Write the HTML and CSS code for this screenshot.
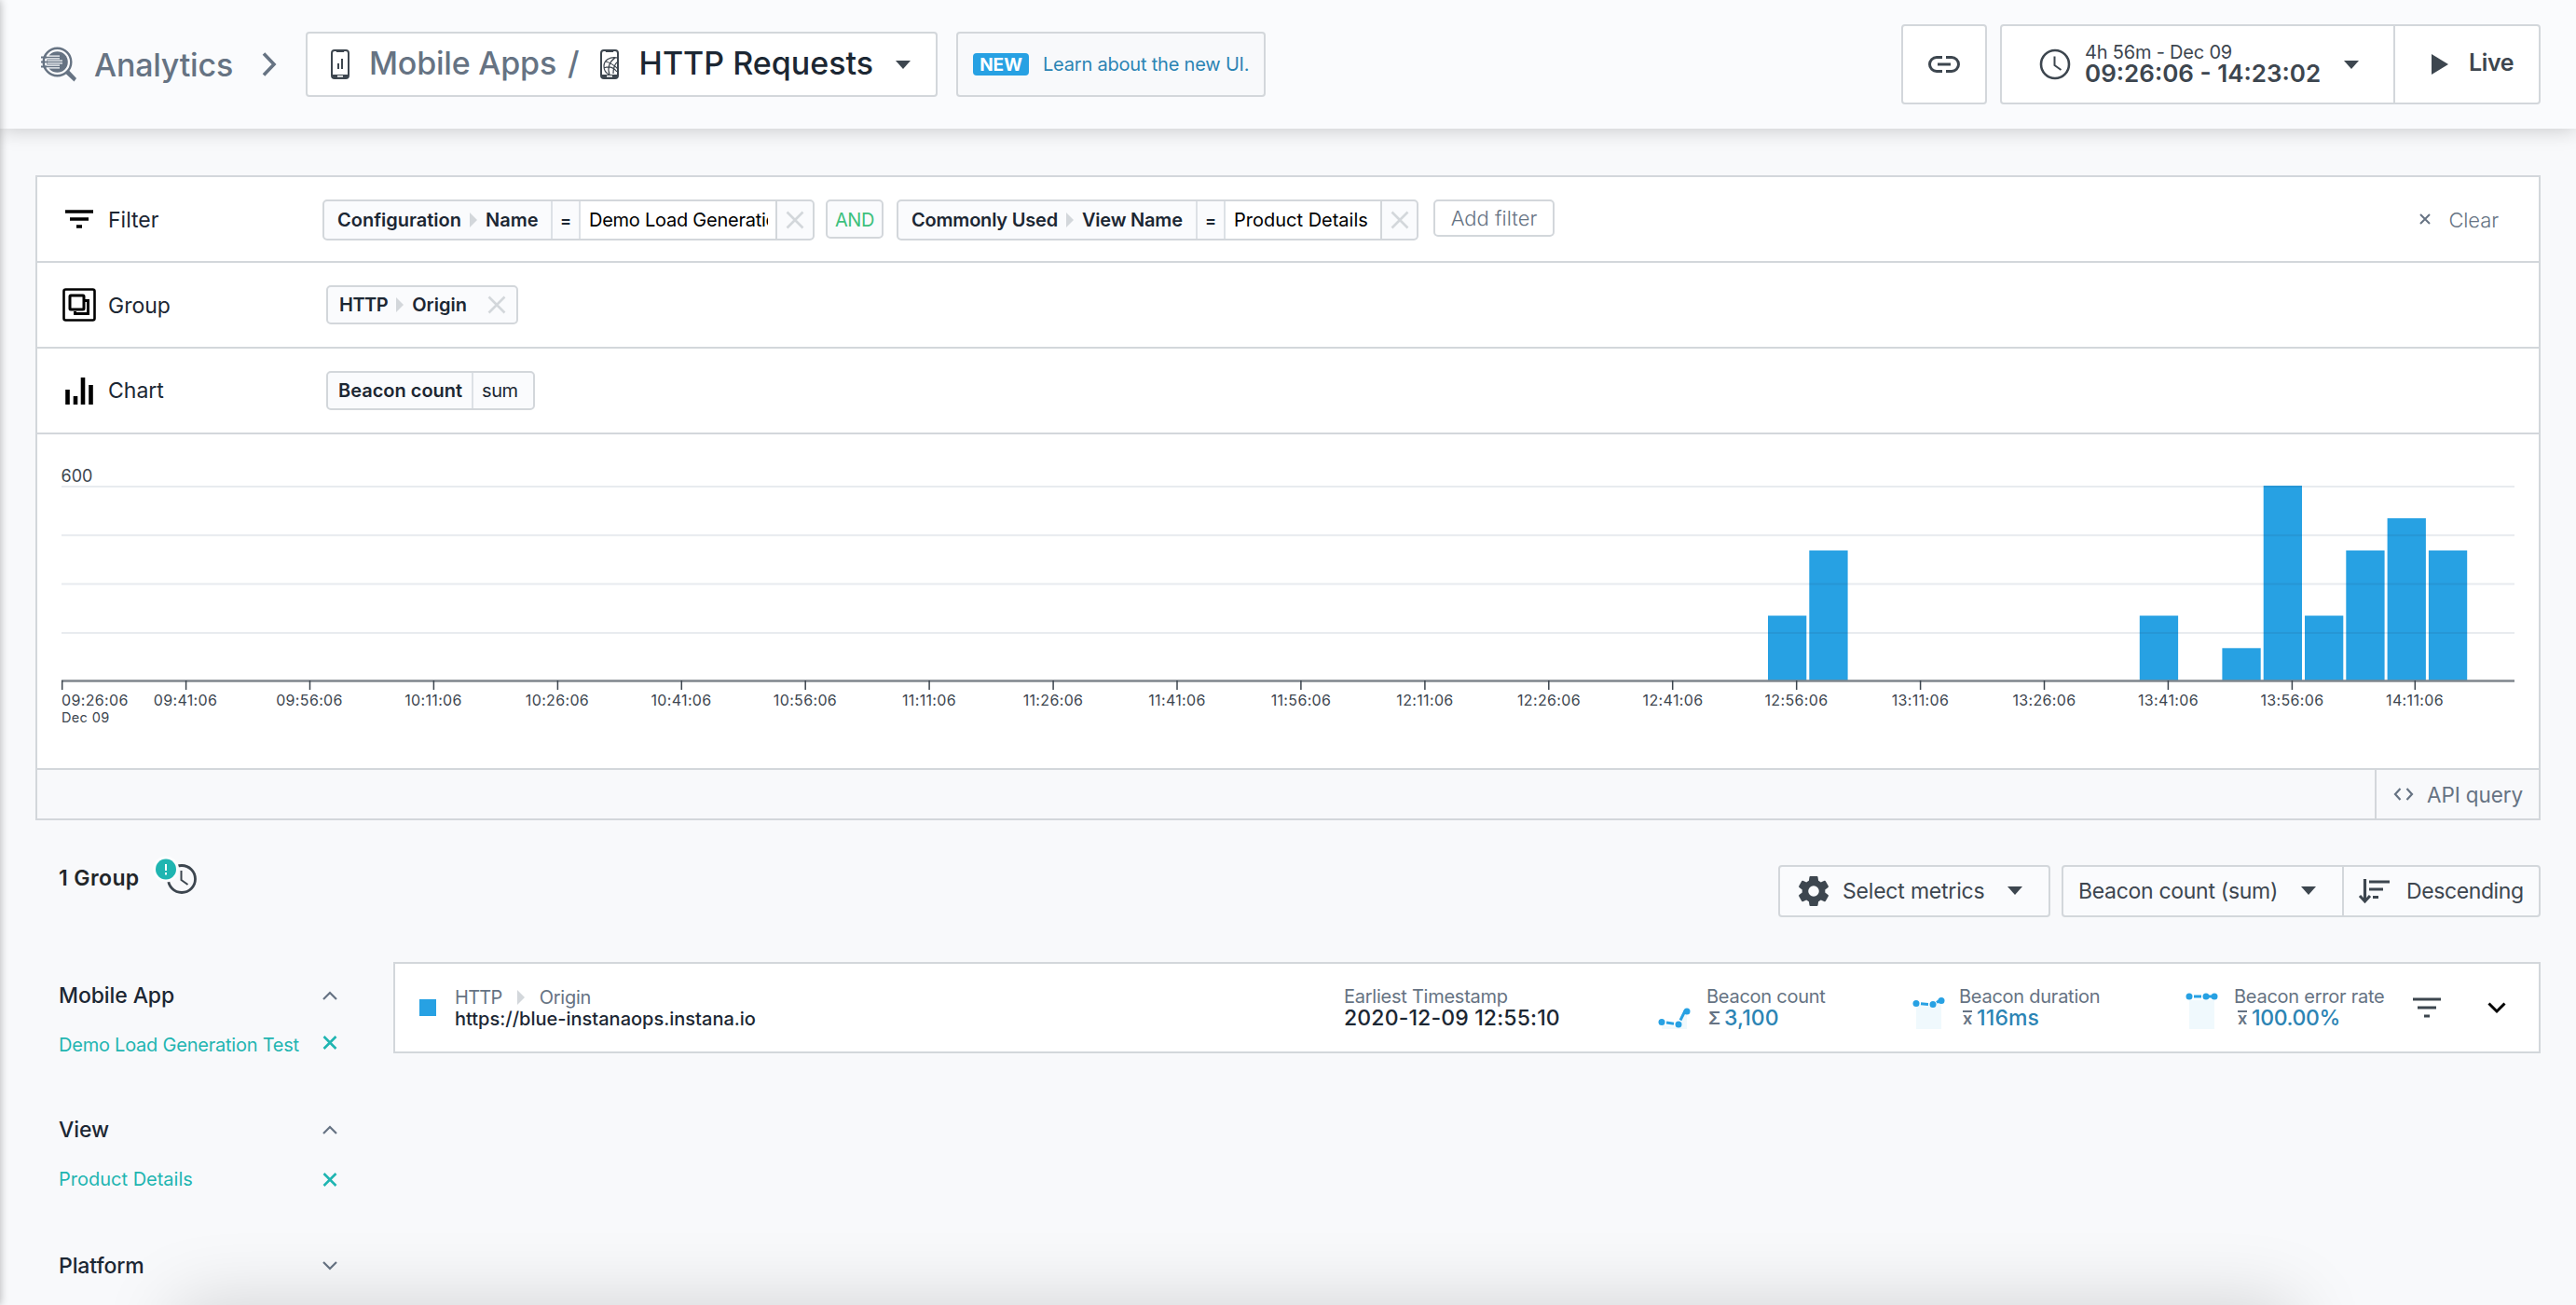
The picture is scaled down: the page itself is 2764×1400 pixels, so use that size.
FILE: index.html
```html
<!DOCTYPE html>
<html lang="en">
<head>
    <meta charset="UTF-8">
    <title>Analytics - HTTP Requests</title>
    <link rel="stylesheet" href="styles.css">
</head>
<body>
    <header class="topbar">
        <div class="crumb">
            <svg class="crumb-icon" width="40" height="38" viewBox="0 0 40 38">
                <path d="M0 11.500h6M0 16.500h5M0 21.500h6" stroke="#667383" stroke-width="1.800"/>
                <circle cx="17.500" cy="16.500" r="14.800" fill="none" stroke="#667383" stroke-width="2.400"/>
                <circle cx="17.500" cy="16.500" r="11.300" fill="#667383"/>
                <path d="M26 28.500l4-3 8 8.500-2.500 3.500z" fill="#667383"/>
                <path d="M7 11.500h13M7 16.500h16M7 21.500h13" stroke="#fafbfd" stroke-width="4.200"/>
                <path d="M5 11.500h16M5 16.500h19M5 21.500h16" stroke="#667383" stroke-width="1.700"/>
            </svg>
            <span class="crumb-text">Analytics</span>
            <svg class="crumb-sep" width="16" height="26" viewBox="0 0 16 26"><path d="M2 1.500l11 11.500-11 11.500" fill="none" stroke="#667383" stroke-width="3.600"/></svg>
        </div>

        <div class="box source-select">
            <svg class="phone-icon" width="20" height="32" viewBox="0 0 20 32">
                <rect x="1" y="1" width="18" height="30" rx="3" fill="none" stroke="#3d464f" stroke-width="2"/>
                <path d="M5 0h10l-1 3H6zM1 27h18v2a2 2 0 0 1-2 2H3a2 2 0 0 1-2-2z" fill="#3d464f"/>
                <path d="M7 28.800h6" stroke="#fff" stroke-width="1.600"/>
                <path d="M8 15v6M12 10v11" stroke="#3d464f" stroke-width="2"/>
            </svg>
            <span class="source-app">Mobile Apps</span>
            <span class="source-slash">/</span>
            <svg class="phone-icon" width="20" height="32" viewBox="0 0 20 32">
                <rect x="1" y="1" width="18" height="30" rx="3" fill="none" stroke="#3d464f" stroke-width="2"/>
                <path d="M5 0h10l-1 3H6zM1 27h18v2a2 2 0 0 1-2 2H3a2 2 0 0 1-2-2z" fill="#3d464f"/>
                <path d="M7 28.800h6" stroke="#fff" stroke-width="1.600"/>
                <path d="M19 9C10 7 4 12 4 18s3 8 6 9M16 9C9 14 8 21 10 27M6 13c4 1 9 4 13 8M4 20c5-2 10-1 14 4M19 13c-4 3-5 8-5 13" fill="none" stroke="#3d464f" stroke-width="1.200"/>
            </svg>
            <span class="source-type">HTTP Requests</span>
            <span class="caret"></span>
        </div>

        <div class="box new-ui">
            <span class="badge">NEW</span>
            <a class="new-link">Learn about the new UI.</a>
        </div>

        <div class="box link-btn">
            <svg width="34" height="18" viewBox="0 0 34 18"><path d="M15 1.500H9a7.500 7.500 0 0 0 0 15H15M19 1.500h6a7.500 7.500 0 0 1 0 15H19M10 9h14" fill="none" stroke="#3d464f" stroke-width="3"/></svg>
        </div>

        <div class="box time-picker">
            <div class="time-range">
                <svg class="clock" width="34" height="34" viewBox="0 0 34 34"><circle cx="17" cy="17" r="15" fill="none" stroke="#3d464f" stroke-width="2.600"/><path d="M16.500 8.500v9.500l7 5" fill="none" stroke="#3d464f" stroke-width="2"/></svg>
                <div class="time-labels">
                    <span class="time-span">4h 56m - Dec 09</span>
                    <span class="time-value">09:26:06 - 14:23:02</span>
                </div>
                <span class="caret"></span>
            </div>
            <div class="live">
                <svg width="18" height="22" viewBox="0 0 18 22"><path d="M0 0l18 11L0 22z" fill="#3d464f"/></svg>
                <span class="live-text">Live</span>
            </div>
        </div>
    </header>

    <main class="content">
        <section class="panel">
            <div class="row row-filter">
                <div class="row-icon"><svg width="30" height="20" viewBox="0 0 30 20"><path d="M0 2h30M5 10h20M12 18h6" stroke="#000" stroke-width="3.600"/></svg></div>
                <span class="row-label">Filter</span>
                <div class="chips">
                    <div class="chip chip-long">
                        <div class="chip-key"><span>Configuration</span><i class="tri"></i><span>Name</span></div>
                        <div class="chip-op">=</div>
                        <div class="chip-value">Demo Load Generation Test</div>
                        <div class="chip-x"><svg width="20" height="20" viewBox="0 0 20 20"><path d="M1.500 1.500l17 17M18.500 1.500l-17 17"/></svg></div>
                    </div>
                    <div class="chip-and">AND</div>
                    <div class="chip chip-short">
                        <div class="chip-key"><span>Commonly Used</span><i class="tri"></i><span>View Name</span></div>
                        <div class="chip-op">=</div>
                        <div class="chip-value">Product Details</div>
                        <div class="chip-x"><svg width="20" height="20" viewBox="0 0 20 20"><path d="M1.500 1.500l17 17M18.500 1.500l-17 17"/></svg></div>
                    </div>
                    <div class="add-filter">Add filter</div>
                </div>
                <div class="clear">
                    <svg width="12" height="12" viewBox="0 0 12 12"><path d="M1 1l10 10M11 1L1 11" stroke="#667383" stroke-width="2"/></svg>
                    <span class="clear-text">Clear</span>
                </div>
            </div>

            <div class="row row-group">
                <div class="row-icon"><svg width="36" height="36" viewBox="0 0 36 36"><rect x="1.500" y="1.500" width="33" height="33" rx="2" fill="none" stroke="#000" stroke-width="2.600"/><rect x="8" y="8" width="15" height="15" rx="1" fill="none" stroke="#000" stroke-width="3"/><path d="M24 13.500h3.500v14h-14V25" fill="none" stroke="#000" stroke-width="3"/></svg></div>
                <span class="row-label">Group</span>
                <div class="tag tag-group"><span class="tag-http">HTTP</span><i class="tri"></i><span>Origin</span><svg class="tag-x" width="20" height="20" viewBox="0 0 20 20"><path d="M1.500 1.500l17 17M18.500 1.500l-17 17"/></svg></div>
            </div>

            <div class="row row-chart">
                <div class="row-icon"><svg width="30" height="30" viewBox="0 0 30 30"><path d="M2.500 14v16M11 21v9M19 1v29M27.500 9v21" stroke="#000" stroke-width="4.600"/></svg></div>
                <span class="row-label">Chart</span>
                <div class="tag tag-chart"><span class="tag-key">Beacon count</span><span class="tag-agg">sum</span></div>
            </div>

            <div class="chart">
                <svg width="2684" height="358" viewBox="0 0 2684 358">
                    <g fill="#27a1e3">
                        <rect x="1857" y="194.500" width="41.300" height="69.500"/>
                        <rect x="1901.300" y="124.500" width="41.300" height="139.500"/>
                        <rect x="2255.800" y="194.500" width="41.300" height="69.500"/>
                        <rect x="2344.400" y="229.300" width="41.300" height="34.700"/>
                        <rect x="2388.700" y="55" width="41.300" height="209"/>
                        <rect x="2433" y="194.500" width="41.300" height="69.500"/>
                        <rect x="2477.300" y="124.500" width="41.300" height="139.500"/>
                        <rect x="2521.600" y="90" width="41.300" height="174"/>
                        <rect x="2565.900" y="124.500" width="41.300" height="139.500"/>
                    </g>
                    <path class="grid" d="M26 56h2632M26 108.300h2632M26 160.600h2632M26 212.900h2632"/>
                    <path class="axis" d="M26 264.500h2632"/>
                    <path class="ticks" d="M26.700 264v10M159.600 264v10M292.500 264v10M425.400 264v10M558.400 264v10M691.300 264v10M824.200 264v10M957.100 264v10M1090.100 264v10M1223 264v10M1355.900 264v10M1488.900 264v10M1621.800 264v10M1754.700 264v10M1887.700 264v10M2020.600 264v10M2153.500 264v10M2286.400 264v10M2419.400 264v10M2551.300 264v10"/>
                    <text class="ymax" x="25.500" y="50.500">600</text>
                    <g class="tick-labels">
                        <text class="first" x="26" y="291">09:26:06</text>
                        <text x="159" y="291">09:41:06</text>
                        <text x="292" y="291">09:56:06</text>
                        <text x="425" y="291">10:11:06</text>
                        <text x="558" y="291">10:26:06</text>
                        <text x="691" y="291">10:41:06</text>
                        <text x="824" y="291">10:56:06</text>
                        <text x="957" y="291">11:11:06</text>
                        <text x="1090" y="291">11:26:06</text>
                        <text x="1223" y="291">11:41:06</text>
                        <text x="1356" y="291">11:56:06</text>
                        <text x="1489" y="291">12:11:06</text>
                        <text x="1622" y="291">12:26:06</text>
                        <text x="1755" y="291">12:41:06</text>
                        <text x="1887.500" y="291">12:56:06</text>
                        <text x="2020.500" y="291">13:11:06</text>
                        <text x="2153.500" y="291">13:26:06</text>
                        <text x="2286.500" y="291">13:41:06</text>
                        <text x="2419.500" y="291">13:56:06</text>
                        <text x="2551" y="291">14:11:06</text>
                        <text class="first day" x="26" y="309">Dec 09</text>
                    </g>
                </svg>
            </div>

            <div class="panel-footer">
                <div class="api">
                    <svg width="22" height="14" viewBox="0 0 22 14"><path d="M7.500 1L2 7l5.500 6M14.500 1L20 7l-5.500 6" fill="none" stroke="#667383" stroke-width="2.200"/></svg>
                    <span class="api-text">API query</span>
                </div>
            </div>
        </section>

        <section class="toolbar">
            <span class="group-count">1 Group</span>
            <svg class="group-clock" width="46" height="44" viewBox="0 0 46 44">
                <circle cx="29" cy="25" r="14.500" fill="none" stroke="#3d464f" stroke-width="2.800"/>
                <path d="M28.500 16v10l7 5" fill="none" stroke="#3d464f" stroke-width="2"/>
                <circle cx="12" cy="14.500" r="14" fill="#fcfdfe"/>
                <circle cx="12" cy="14.500" r="11" fill="#1fb5b1"/>
                <path d="M12 9v7M12 18v2.500" stroke="#fff" stroke-width="2"/>
            </svg>
            <div class="box btn metrics">
                <svg width="32" height="32" viewBox="0 0 32 32"><path fill="#3d464f" fill-rule="evenodd" d="M12.500 0h7a1 1 0 0 1 1 .8l.6 4 2.700 1.600 3.800-1.600a1 1 0 0 1 1.200.4l3 5.400a1 1 0 0 1-.3 1.300l-3.200 2.500v3.200l3.200 2.500a1 1 0 0 1 .3 1.300l-3 5.400a1 1 0 0 1-1.200.4l-3.800-1.600-2.700 1.600-.6 4a1 1 0 0 1-1 .8h-7a1 1 0 0 1-1-.8l-.6-4-2.700-1.600-3.800 1.600a1 1 0 0 1-1.200-.4l-3-5.400a1 1 0 0 1 .3-1.300l3.200-2.500v-3.200L.5 11.900a1 1 0 0 1-.3-1.300l3-5.400a1 1 0 0 1 1.200-.4l3.800 1.600 2.700-1.600.6-4a1 1 0 0 1 1-.8zM16 10.200a5.800 5.800 0 1 0 0 11.600 5.800 5.800 0 1 0 0-11.600z"/></svg>
                <span class="metrics-text">Select metrics</span>
                <span class="caret"></span>
            </div>
            <div class="box btn sorting">
                <div class="sort-by"><span class="sort-text">Beacon count (sum)</span><span class="caret"></span></div>
                <div class="sort-dir">
                    <svg width="33" height="26" viewBox="0 0 33 26"><path d="M6.500 0v22" stroke="#3d464f" stroke-width="3.200"/><path d="M1 18l5.500 6 5.500-6" fill="none" stroke="#3d464f" stroke-width="3"/><path d="M11 3h22M11 11h15M15 19.500h6" stroke="#3d464f" stroke-width="3.200"/></svg>
                    <span class="dir-text">Descending</span>
                </div>
            </div>
        </section>

        <section class="results">
            <aside class="facets">
                <div class="facet-title"><span>Mobile App</span><svg width="16" height="10" viewBox="0 0 16 10"><path d="M1 9l7-7 7 7"/></svg></div>
                <div class="facet-item"><span>Demo Load Generation Test</span><svg class="raised" width="16" height="15" viewBox="0 0 16 15"><path d="M1.500 1l13 13M14.500 1l-13 13"/></svg></div>
                <div class="facet-title"><span>View</span><svg width="16" height="10" viewBox="0 0 16 10"><path d="M1 9l7-7 7 7"/></svg></div>
                <div class="facet-item"><span>Product Details</span><svg width="16" height="15" viewBox="0 0 16 15"><path d="M1.500 1l13 13M14.500 1l-13 13"/></svg></div>
                <div class="facet-title"><span>Platform</span><svg width="16" height="10" viewBox="0 0 16 10"><path d="M1 1l7 7 7-7"/></svg></div>
            </aside>

            <div class="result">
                <div class="swatch"></div>
                <div class="origin">
                    <div class="line1"><span class="origin-http">HTTP</span><i class="tri"></i><span>Origin</span></div>
                    <div class="line2">https://blue-instanaops.instana.io</div>
                </div>
                <div class="metric timestamp">
                    <div class="line1">Earliest Timestamp</div>
                    <div class="line2"><span class="stamp">2020-12-09 12:55:10</span></div>
                </div>
                <svg class="spark" width="36" height="40" viewBox="0 0 36 40">
                    <path d="M4 34l18 3 9-18v20H4z" fill="#f0f9fd"/>
                    <path d="M9 32l8 1.200M24 29.500l5-10" fill="none" stroke="#27a1e3" stroke-width="3"/>
                    <g fill="#27a1e3"><circle cx="4" cy="31.500" r="3.500"/><circle cx="22" cy="34" r="3.500"/><circle cx="31" cy="20" r="3.500"/></g>
                </svg>
                <div class="metric count">
                    <div class="line1">Beacon count</div>
                    <div class="line2"><span class="agg">Σ</span><span class="num">3,100</span></div>
                </div>
                <svg class="spark" width="36" height="40" viewBox="0 0 36 40">
                    <path d="M4 13l18 1 9-4v29H4z" fill="#f0f9fd"/>
                    <path d="M9 11.800l8 .6M26 10.500l3-2" fill="none" stroke="#27a1e3" stroke-width="3"/>
                    <g fill="#27a1e3"><circle cx="4" cy="11.500" r="3.500"/><circle cx="22" cy="12.500" r="3.500"/><circle cx="31" cy="8.500" r="3.500"/></g>
                </svg>
                <div class="metric duration">
                    <div class="line1">Beacon duration</div>
                    <div class="line2"><span class="agg mean">x</span><span class="num">116ms</span></div>
                </div>
                <svg class="spark" width="36" height="40" viewBox="0 0 36 40">
                    <path d="M4 8h27v31H4z" fill="#f0f9fd"/>
                    <path d="M9 4h8M25 4h3" fill="none" stroke="#27a1e3" stroke-width="3"/>
                    <g fill="#27a1e3"><circle cx="4" cy="4" r="3.500"/><circle cx="22" cy="4" r="3.500"/><circle cx="31" cy="4" r="3.500"/></g>
                </svg>
                <div class="metric errors">
                    <div class="line1">Beacon error rate</div>
                    <div class="line2"><span class="agg mean">x</span><span class="num">100.00%</span></div>
                </div>
                <svg width="30" height="22" viewBox="0 0 30 22"><path d="M0 2h30M5 11h20M12 20h6" stroke="#3d464f" stroke-width="3.200"/></svg>
                <svg class="result-toggle" width="20" height="13" viewBox="0 0 20 13"><path d="M1.500 1.500L10 10l8.500-8.500" fill="none" stroke="#000" stroke-width="3"/></svg>
            </div>
        </section>
    </main>
</body>
</html>
```
FILE: styles.css
```css
* {
    box-sizing: border-box;
}

body {
    margin: 0;
    height: 1400px;
    overflow: hidden;
    position: relative;
    background: #f8f9fb;
    color: #1c2733;
    font-family: Inter, "Liberation Sans", sans-serif;
    font-size: 20px;
    white-space: nowrap;
}

/* edge of the navigation on the left */
body::before {
    content: "";
    position: absolute;
    z-index: 2;
    left: -10px;
    top: 0;
    width: 10px;
    height: 1400px;
    box-shadow: 0 0 10px rgba(0, 0, 0, 0.3);
}

/* shadow of the drawer below the fold */
body::after {
    content: "";
    position: absolute;
    left: 200px;
    top: 1410px;
    width: 2250px;
    height: 60px;
    box-shadow: 0 0 80px 10px rgba(0, 0, 0, 0.17);
}

svg {
    display: block;
    flex: none;
    overflow: visible;
}

.box {
    display: flex;
    align-items: center;
    background: #fff;
    border: 2px solid #d3d7db;
    border-radius: 4px;
}

.caret {
    border-left: 8px solid transparent;
    border-right: 8px solid transparent;
    border-top: 9px solid #3d464f;
}

.tri {
    border-top: 8px solid transparent;
    border-bottom: 8px solid transparent;
    border-left: 8px solid #d3d7db;
}

/* top bar */
.topbar {
    display: flex;
    align-items: center;
    height: 138px;
    padding: 0 38px 0 44px;
    background: #fafbfd;
    box-shadow: 0 0 22px rgba(0, 0, 0, 0.22);
}

.crumb {
    display: flex;
    align-items: center;
    width: 284px;
    color: #667383;
}

.crumb-text {
    margin-left: 17px;
    font-size: 34px;
    font-weight: 500;
    letter-spacing: -0.2px;
}

.crumb-sep {
    margin-left: auto;
    margin-right: 31px;
}

.source-select {
    width: 678px;
    height: 70px;
    padding-left: 25px;
    font-size: 34px;
    font-weight: 500;
}

.source-select span:not(.caret) {
    margin-top: -3px;
}

.source-app {
    margin-left: 21px;
    color: #667383;
    letter-spacing: -0.2px;
}

.source-slash {
    margin: 0 22px 0 12px;
    color: #667383;
}

.source-type {
    margin-left: 22px;
}

.source-select .caret {
    margin-left: 24px;
}

.new-ui {
    width: 332px;
    height: 70px;
    margin-left: 20px;
    padding-left: 16px;
    background: #f8f9fb;
}

.badge {
    width: 60px;
    height: 24px;
    border-radius: 4px;
    background: #27a1e3;
    color: #fff;
    font-size: 19px;
    font-weight: 700;
    line-height: 25px;
    text-align: center;
}

.new-link {
    margin-left: 15px;
    color: #2c84b4;
    letter-spacing: -0.2px;
}

.link-btn {
    width: 92px;
    height: 86px;
    margin-left: auto;
    justify-content: center;
}

.time-picker {
    width: 580px;
    height: 86px;
    margin-left: 14px;
    color: #3d464f;
}

.time-range {
    display: flex;
    align-items: center;
    width: 422px;
    height: 82px;
    padding-left: 40px;
    border-right: 2px solid #d3d7db;
}

.time-labels {
    display: flex;
    flex-direction: column;
    margin-left: 15px;
    margin-top: -3px;
}

.time-span {
    line-height: 22px;
    letter-spacing: -0.2px;
}

.time-value {
    font-size: 26px;
    font-weight: 600;
    line-height: 24px;
}

.time-range .caret {
    margin-left: 25px;
}

.live {
    display: flex;
    align-items: center;
    padding-left: 39px;
}

.live-text {
    margin: -4px 0 0 22px;
    font-size: 25px;
    font-weight: 600;
    letter-spacing: -0.4px;
}

/* query panel */
.content {
    padding: 50px 38px 0;
}

.panel {
    border: 2px solid #d3d7db;
    background: #fff;
}

.row {
    display: flex;
    align-items: center;
    height: 92px;
    padding-left: 25px;
    border-bottom: 2px solid #d3d7db;
}

.row-filter {
    padding-top: 2px;
}

.row-icon {
    display: flex;
    justify-content: center;
    width: 40px;
}

.row-filter .row-icon {
    margin-top: -2px;
}

.row-label {
    width: 234px;
    margin-left: 11px;
    font-size: 23px;
}

.row-filter .row-label {
    width: 230px;
}

.row-group .row-label {
    padding-top: 2px;
}

.row-chart .row-label {
    padding-bottom: 1px;
}

.chips {
    display: flex;
    align-items: flex-start;
}

.chip {
    display: flex;
    height: 44px;
    border: 2px solid #d3d7db;
    border-radius: 5px;
    background: #fafbfd;
    overflow: hidden;
}

.chip > div {
    display: flex;
    align-items: center;
}

.chip-long {
    width: 528px;
}

.chip-short {
    width: 560px;
}

.chip-key {
    padding-left: 14px;
    font-weight: 600;
    letter-spacing: -0.2px;
}

.chip-long .chip-key {
    width: 243px;
    letter-spacing: 0;
}

.chip-short .chip-key {
    width: 319px;
}

.chip-key .tri {
    margin: 0 9px;
}

.chip-op {
    width: 32px;
    justify-content: center;
    border-left: 2px solid #dde1e6;
    border-right: 2px solid #dde1e6;
    font-size: 18px;
    font-weight: 600;
}

.chip .chip-value {
    display: block;
    overflow: hidden;
    padding-left: 9px;
    background: #fff;
    color: #000;
    line-height: 40px;
}

.chip-long .chip-value {
    width: 209px;
    border-right: 8px solid #fff;
    letter-spacing: -0.25px;
}

.chip-short .chip-value {
    width: 166px;
}

.chip-x {
    flex: 1;
    justify-content: center;
    border-left: 2px solid #d3d7db;
}

.chip-x path,
.tag-x path {
    fill: none;
    stroke: #d3d7db;
    stroke-width: 2.6;
}

.chip-and {
    width: 62px;
    height: 42px;
    margin: 0 14px 0 12px;
    border: 2px solid #d3d7db;
    border-radius: 5px;
    background: #fafbfd;
    color: #3dc07c;
    letter-spacing: -0.4px;
    line-height: 40px;
    text-align: center;
}

.add-filter {
    width: 130px;
    height: 40px;
    margin-left: 16px;
    border: 2px solid #d3d7db;
    border-radius: 5px;
    color: #667383;
    font-size: 22px;
    font-weight: 300;
    line-height: 36px;
    text-align: center;
}

.clear {
    display: flex;
    align-items: center;
    margin-left: auto;
    padding-right: 43px;
    color: #667383;
}

.clear svg {
    margin-top: -2px;
}

.clear-text {
    margin-left: 19px;
    font-size: 22px;
    font-weight: 300;
    letter-spacing: -0.1px;
}

.tag {
    display: flex;
    align-items: center;
    height: 42px;
    padding-left: 12px;
    border: 2px solid #d3d7db;
    border-radius: 5px;
    background: #fafbfd;
    font-weight: 600;
}

.tag-group {
    width: 206px;
}

.tag-http {
    letter-spacing: -0.5px;
}

.tag-group .tri {
    margin: 0 9px;
}

.tag-x {
    margin-left: 22px;
}

.tag-chart {
    width: 224px;
}

.tag-key {
    width: 142px;
    margin-left: -1px;
    margin-right: 1px;
}

.tag-agg {
    padding-left: 9px;
    border-left: 2px solid #dde1e6;
    font-weight: 400;
    letter-spacing: -0.4px;
    line-height: 38px;
}

/* chart */
.chart {
    height: 358px;
}

.grid {
    stroke: #193c5f;
    stroke-opacity: 0.1;
    stroke-width: 2;
}

.axis {
    stroke: #7f868d;
    stroke-width: 2.4;
}

.ticks {
    stroke: #3d464f;
    stroke-width: 1.5;
}

.ymax {
    fill: #3d464f;
    font-size: 18px;
}

.tick-labels {
    fill: #3d464f;
    font-size: 16px;
    letter-spacing: 0.35px;
    text-anchor: middle;
}

.tick-labels .first {
    text-anchor: start;
}

.tick-labels .day {
    font-size: 14.5px;
}

.panel-footer {
    display: flex;
    justify-content: flex-end;
    height: 54px;
    border-top: 2px solid #d3d7db;
    background: #f8f9fb;
}

.api {
    display: flex;
    align-items: center;
    width: 176px;
    padding-left: 18px;
    border-left: 2px solid #d3d7db;
    color: #667383;
}

.api-text {
    margin-left: 14px;
    font-size: 22.5px;
    letter-spacing: -0.1px;
}

/* toolbar */
.toolbar {
    display: flex;
    align-items: flex-start;
    height: 56px;
    margin-top: 48px;
    padding-left: 25px;
    color: #3d464f;
    font-size: 23px;
}

.group-count {
    width: 103px;
    color: #222629;
    font-weight: 600;
    letter-spacing: 0.4px;
    line-height: 28px;
}

.group-clock {
    margin-top: -10px;
}

.btn {
    height: 56px;
    background: #fafbfd;
}

.metrics {
    width: 292px;
    margin-left: auto;
    padding-left: 20px;
}

.metrics-text {
    margin-left: 15px;
    letter-spacing: -0.2px;
}

.btn .caret {
    margin: -2px 0 0 25px;
}

.sorting {
    width: 514px;
    margin-left: 12px;
}

.sort-by {
    display: flex;
    align-items: center;
    width: 301px;
    height: 52px;
    padding-left: 16px;
    border-right: 2px solid #d3d7db;
    letter-spacing: -0.3px;
}

.sort-dir {
    display: flex;
    align-items: center;
    padding-left: 16px;
    letter-spacing: -0.4px;
}

.dir-text {
    margin-left: 18px;
}

/* facets and groups */
.results {
    display: flex;
    align-items: flex-start;
    margin-top: 48px;
}

.facets {
    width: 384px;
    padding: 16px 60px 0 25px;
}

.facet-title,
.facet-item {
    display: flex;
    align-items: center;
    justify-content: space-between;
    height: 40px;
}

.facet-title {
    font-size: 23px;
    font-weight: 500;
    letter-spacing: -0.1px;
}

.facet-item {
    margin: 13px 0 51px;
    color: #1fb5b1;
    letter-spacing: -0.23px;
}

.facet-item + .facet-title ~ .facet-item {
    margin-bottom: 53px;
    letter-spacing: 0;
}

.facet-title path {
    fill: none;
    stroke: #667383;
    stroke-width: 2.2;
}

.facet-item path {
    stroke: #1fb5b1;
    stroke-width: 2.6;
}

.raised {
    margin-bottom: 6px;
}

.result {
    display: flex;
    align-items: center;
    width: 2304px;
    height: 98px;
    padding-left: 26px;
    border: 2px solid #d3d7db;
    background: #fff;
}

.swatch {
    width: 18px;
    height: 18px;
    background: #27a1e3;
}

.origin {
    width: 954px;
    margin-left: 20px;
    padding-top: 2px;
}

.line1 {
    display: flex;
    align-items: center;
    height: 22px;
    color: #667383;
    letter-spacing: -0.25px;
}

.line2 {
    display: flex;
    align-items: center;
    height: 24px;
    font-weight: 500;
}

.origin-http {
    letter-spacing: -0.7px;
}

.line1 .tri {
    margin: 0 16px;
}

.timestamp {
    width: 337px;
}

.stamp,
.num {
    font-size: 23px;
    letter-spacing: 0.15px;
}

.num {
    color: #2c84b4;
}

.agg {
    width: 19px;
    padding-left: 2px;
    color: #667383;
    font-size: 19px;
    font-weight: 600;
}

/* x with a bar over it */
.mean {
    width: 10px;
    height: 17px;
    margin: 0 5px 0 4px;
    padding: 0;
    border-top: 2px solid #667383;
    font-size: 18px;
    line-height: 14px;
}

.spark {
    margin-top: 8px;
}

.count {
    width: 221px;
    margin-left: 16px;
}

.duration {
    width: 243px;
    margin-left: 14px;
}

.errors {
    width: 192px;
    margin-left: 16px;
}

.errors .num {
    letter-spacing: -0.35px;
}

.result-toggle {
    margin-left: 50px;
}
```
